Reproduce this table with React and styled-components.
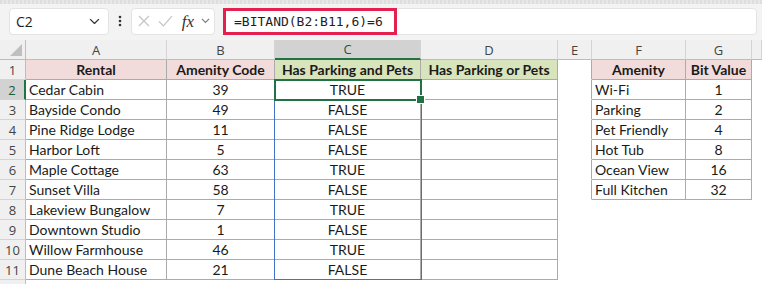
import React from 'react';
import styled, { createGlobalStyle } from 'styled-components';

const GlobalStyle = createGlobalStyle`
  html, body {
    margin: 0;
    padding: 0;
    background: #ffffff;
    overflow: hidden;
  }
  * {
    box-sizing: border-box;
  }
`;

const Page = styled.div`
  width: 762px;
  height: 284px;
  overflow: hidden;
  background: #f3f3f3;
  font-family: Lato, 'Open Sans', sans-serif;
`;

const TopStrip = styled.div`
  height: 4px;
  background: repeating-linear-gradient(90deg, #dedede 0 2px, #e8e8e8 2px 4px);
`;

const Toolbar = styled.div`
  display: flex;
  align-items: center;
  height: 36px;
  padding: 3px 5px 5px 9px;
`;

const NameBox = styled.div`
  width: 100px;
  height: 27px;
  background: #ffffff;
  border: 1px solid #e3e3e3;
  border-radius: 4px;
  display: flex;
  align-items: center;
  justify-content: space-between;
  padding: 0 8px 0 6px;
  font-family: 'Open Sans', 'Noto Sans', sans-serif;
  font-size: 14px;
  color: #1f1f1f;
`;

const Dots = styled.div`
  width: 22px;
  display: flex;
  justify-content: center;
`;

const FnBox = styled.div`
  width: 84px;
  height: 27px;
  background: #ffffff;
  border: 1px solid #e3e3e3;
  border-radius: 4px;
  display: flex;
  align-items: center;
  padding: 0 4px 0 5px;
  gap: 7px;
`;

const Fx = styled.span`
  font-family: 'Liberation Serif', 'DejaVu Serif', serif;
  font-style: italic;
  font-size: 17px;
  color: #333;
  margin-left: 2px;
  line-height: 1;
`;

const FormulaBar = styled.div`
  flex: 1;
  height: 27px;
  margin-left: 8px;
  background: #ffffff;
  border: 1px solid #e3e3e3;
  border-radius: 4px;
  display: flex;
  align-items: center;
`;

const FormulaText = styled.div`
  height: 27px;
  margin-left: -1px;
  width: 174px;
  border: 3px solid #e3204e;
  padding-left: 8px;
  display: flex;
  align-items: center;
  font-family: 'DejaVu Sans Mono', 'Liberation Mono', monospace;
  font-size: 13px;
  color: #1f1f1f;
`;

const Sheet = styled.div`
  position: relative;
  display: grid;
  grid-template-columns: 26px 141px 108px 146px 137px 34px 94px 66px 1fr;
  grid-auto-rows: 20px;
  background: #ffffff;
  font-size: 14px;
  color: #1a1a1a;
`;

const ColHead = styled.div`
  display: flex;
  align-items: center;
  justify-content: center;
  background: ${(p) => (p.$active ? '#d2d2d2' : '#f0f0f0')};
  color: ${(p) => (p.$active ? '#185c37' : '#444')};
  border-right: 1px solid #d4d4d4;
  border-bottom: ${(p) => (p.$active ? '2px solid #217346' : '1px solid #bdbdbd')};
  font-family: 'Open Sans', 'Noto Sans', sans-serif;
  font-size: 13px;
`;

const Corner = styled.div`
  position: relative;
  background: #f0f0f0;
  border-right: 1px solid #bdbdbd;
  border-bottom: 1px solid #bdbdbd;
  &::after {
    content: '';
    position: absolute;
    right: 3px;
    bottom: 3px;
    border-left: 12px solid transparent;
    border-bottom: 12px solid #bfbfbf;
  }
`;

const RowHead = styled.div`
  display: flex;
  align-items: center;
  justify-content: center;
  background: ${(p) => (p.$active ? '#d2d2d2' : '#f0f0f0')};
  color: ${(p) => (p.$active ? '#185c37' : '#444')};
  border-bottom: 1px solid #d4d4d4;
  border-right: ${(p) => (p.$active ? '2px solid #217346' : '1px solid #bdbdbd')};
  font-family: 'Open Sans', 'Noto Sans', sans-serif;
  font-size: 13px;
`;

const Cell = styled.div`
  display: flex;
  align-items: center;
  justify-content: ${(p) => (p.$center ? 'center' : 'flex-start')};
  padding: 0 3px;
  white-space: nowrap;
  overflow: hidden;
  background: ${(p) => p.$fill || '#ffffff'};
  font-weight: ${(p) => (p.$bold ? 700 : 400)};
  border-right: 1px solid ${(p) => (p.$edge ? '#ababab' : 'transparent')};
  border-bottom: 1px solid ${(p) => (p.$line ? '#ababab' : 'transparent')};
`;

const Range = styled.div`
  position: absolute;
  left: 274px;
  top: 40px;
  width: 148px;
  height: 200px;
  border: 1px solid #4472c4;
  pointer-events: none;
`;

const Active = styled.div`
  position: absolute;
  left: 274px;
  top: 39px;
  width: 148px;
  height: 22px;
  border: 2px solid #217346;
  pointer-events: none;
  &::after {
    content: '';
    position: absolute;
    right: -5px;
    bottom: -5px;
    width: 7px;
    height: 7px;
    background: #217346;
    border: 1px solid #ffffff;
  }
`;

const PINK = '#f2dcdb';
const GREEN = '#d8e4bc';

const rentals = [
  ['Cedar Cabin', 39, 'TRUE'],
  ['Bayside Condo', 49, 'FALSE'],
  ['Pine Ridge Lodge', 11, 'FALSE'],
  ['Harbor Loft', 5, 'FALSE'],
  ['Maple Cottage', 63, 'TRUE'],
  ['Sunset Villa', 58, 'FALSE'],
  ['Lakeview Bungalow', 7, 'TRUE'],
  ['Downtown Studio', 1, 'FALSE'],
  ['Willow Farmhouse', 46, 'TRUE'],
  ['Dune Beach House', 21, 'FALSE'],
];

const amenities = [
  ['Wi-Fi', 1],
  ['Parking', 2],
  ['Pet Friendly', 4],
  ['Hot Tub', 8],
  ['Ocean View', 16],
  ['Full Kitchen', 32],
];

const cols = ['A', 'B', 'C', 'D', 'E', 'F', 'G', ''];

const Chevron = ({ size = 10, color = '#444' }) => (
  <svg width={size} height={size * 0.6} viewBox="0 0 10 6">
    <path d="M1 1l4 4 4-4" fill="none" stroke={color} strokeWidth="1.2" />
  </svg>
);

const App = () => {
  return (
    <Page>
      <GlobalStyle />
      <TopStrip />
      <Toolbar>
        <NameBox>
          <span>C2</span>
          <Chevron size={11} color="#333" />
        </NameBox>
        <Dots>
          <svg width="4" height="12" viewBox="0 0 4 12">
            <circle cx="2" cy="2" r="1.3" fill="#333" />
            <circle cx="2" cy="6" r="1.3" fill="#333" />
            <circle cx="2" cy="10" r="1.3" fill="#333" />
          </svg>
        </Dots>
        <FnBox>
          <svg width="14" height="14" viewBox="0 0 14 14">
            <path d="M2 2l10 10M12 2L2 12" stroke="#c4c4c4" strokeWidth="1.2" />
          </svg>
          <svg width="15" height="14" viewBox="0 0 15 14">
            <path d="M1 7.5l4.5 4.5L14 2" fill="none" stroke="#c4c4c4" strokeWidth="1.2" />
          </svg>
          <Fx>fx</Fx>
          <Chevron size={9} color="#777" />
        </FnBox>
        <FormulaBar>
          <FormulaText>=BITAND(B2:B11,6)=6</FormulaText>
        </FormulaBar>
      </Toolbar>
      <Sheet>
        <Corner />
        {cols.map((c, i) => (
          <ColHead key={i} $active={c === 'C'}>
            {c}
          </ColHead>
        ))}

        <RowHead>1</RowHead>
        <Cell $center $bold $fill={PINK} $edge $line>Rental</Cell>
        <Cell $center $bold $fill={PINK} $edge $line>Amenity Code</Cell>
        <Cell $center $bold $fill={GREEN} $edge $line>Has Parking and Pets</Cell>
        <Cell $center $bold $fill={GREEN} $edge $line>Has Parking or Pets</Cell>
        <Cell $edge />
        <Cell $center $bold $fill={PINK} $edge $line>Amenity</Cell>
        <Cell $center $bold $fill={PINK} $edge $line>Bit Value</Cell>
        <Cell />

        {rentals.map(([name, code, result], i) => {
          const amenity = amenities[i];
          return (
            <React.Fragment key={name}>
              <RowHead $active={i === 0}>{i + 2}</RowHead>
              <Cell $edge $line>{name}</Cell>
              <Cell $center $edge $line>{code}</Cell>
              <Cell $center $edge $line>{result}</Cell>
              <Cell $edge $line />
              <Cell $edge={!!amenity} />
              {amenity ? (
                <>
                  <Cell $edge $line>{amenity[0]}</Cell>
                  <Cell $center $edge $line>{amenity[1]}</Cell>
                </>
              ) : (
                <>
                  <Cell />
                  <Cell />
                </>
              )}
              <Cell />
            </React.Fragment>
          );
        })}
        <RowHead />
        <Range />
        <Active />
      </Sheet>
    </Page>
  );
};

export default App;
